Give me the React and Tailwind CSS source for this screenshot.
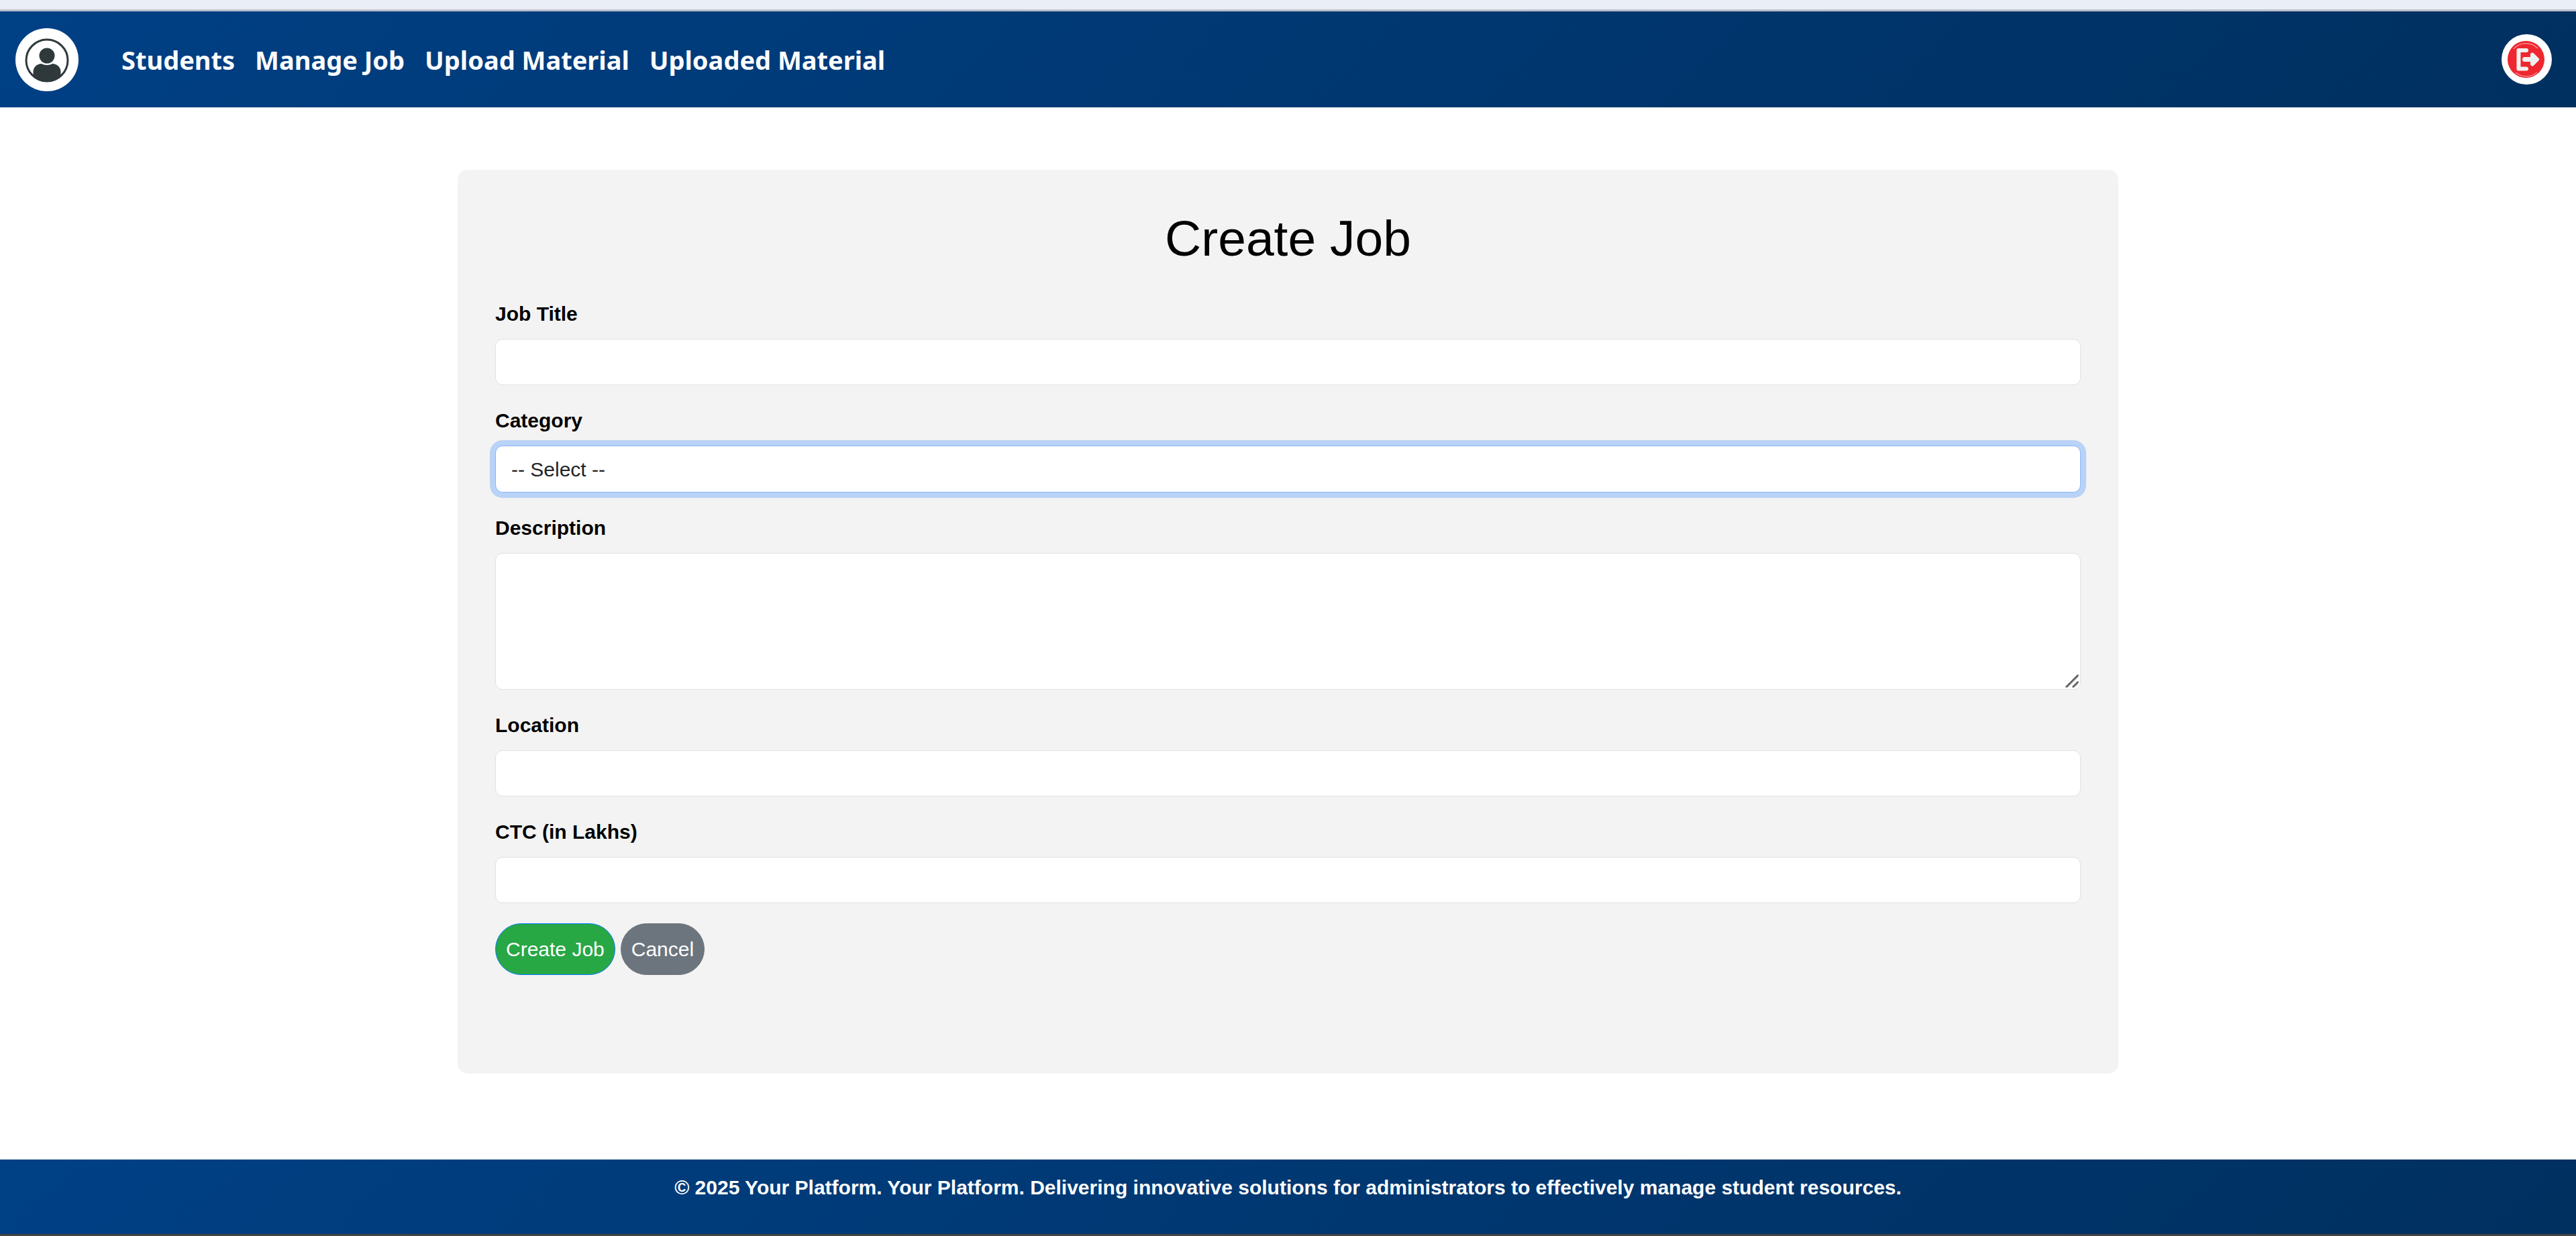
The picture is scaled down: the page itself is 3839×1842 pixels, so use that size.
function AvatarIcon() {
  return (
    <svg viewBox="0 0 94 94" className="size-full" aria-hidden="true">
      <clipPath id="avatar-clip">
        <circle cx="47" cy="47" r="32" />
      </clipPath>
      <circle cx="47" cy="47" r="47" fill="#fff" />
      <circle cx="47" cy="48" r="31" fill="none" stroke="#2f393c" strokeWidth="3" />
      <ellipse cx="47" cy="41" rx="11.5" ry="11.5" fill="#2f393c" />
      <path
        d="M26.500 73V65C26.500 58 32 53 39 53C43 55.500 51 55.500 55 53C62 53 67.500 58 67.500 65V73L60 77L47 80.500L34 77Z"
        fill="#2f393c"
        clipPath="url(#avatar-clip)"
      />
    </svg>
  );
}

function LogoutIcon() {
  return (
    <svg viewBox="0 0 75 75" className="size-full" aria-hidden="true">
      <circle cx="37.500" cy="37.500" r="37.500" fill="#fff" />
      <circle cx="36.500" cy="37.500" r="27.500" fill="#ef2730" />
      <path d="M18 22A25 25 0 0 1 54 21M21 57A25 25 0 0 0 53 57" fill="none" stroke="#f98b90" strokeWidth="1.500" />
      <path d="M37 24H25.500V51.500H37" fill="none" stroke="#f0f0f0" strokeWidth="6" strokeLinecap="round" strokeLinejoin="round" />
      <path d="M34.500 37.500H50" stroke="#f0f0f0" strokeWidth="7" strokeLinecap="round" />
      <path d="M46 30.500L53 37.500L46 44.500Z" fill="#f0f0f0" stroke="#f0f0f0" strokeWidth="6" strokeLinejoin="round" />
    </svg>
  );
}

const links = ["Students", "Manage Job", "Upload Material", "Uploaded Material"];

const fieldClass =
  "block w-full rounded-[11px] border border-[#dee2e6] bg-white px-[23px] text-[30px] text-[#212529] outline-none";

function Field({ id, label, children }) {
  return (
    <div className="mb-[30px]">
      <label htmlFor={id} className="mb-[15px] block w-fit text-[30px] leading-[45px] font-bold">
        {label}
      </label>
      {children}
    </div>
  );
}

export default function App() {
  return (
    <div className="flex min-h-screen flex-col bg-white font-['Liberation_Sans',Arial,sans-serif] text-black">
      <div className="h-[17px] border-b-[3px] border-[#bbbfca] bg-[#eaeef7]" />
      <header className="flex h-[143px] items-center justify-between bg-linear-135 from-[#004085] to-[#003060] pr-9 pl-[23px]">
        <div className="flex items-center gap-16">
          <a href="#profile" aria-label="Profile" className="block size-[94px]">
            <AvatarIcon />
          </a>
          <nav className="flex gap-[30px] font-['Noto_Sans',sans-serif] text-[38px] leading-[56px] font-bold text-white">
            {links.map((link) => (
              <a key={link} href="#nav">
                {link}
              </a>
            ))}
          </nav>
        </div>
        <button type="button" aria-label="Log out" className="size-[75px]">
          <LogoutIcon />
        </button>
      </header>

      <main className="flex-1 pt-[93px]">
        <form className="mx-auto w-full max-w-[2475px] rounded-[15px] bg-[#f3f3f3] px-14 pt-[57px] pb-[147px]">
          <h1 className="mb-[45px] text-center text-[75px] leading-[90px]">Create Job</h1>
          <Field id="title" label="Job Title">
            <input id="title" type="text" className={`${fieldClass} h-[69px]`} />
          </Field>
          <Field id="category" label="Category">
            <select
              id="category"
              className="block h-[70px] w-full appearance-none rounded-[11px] border border-[#86b7fe] bg-white px-[23px] text-[30px] text-[#212529] ring-8 ring-[#b9d2f7] outline-none"
            >
              <option>-- Select --</option>
            </select>
          </Field>
          <Field id="description" label="Description">
            <div className="relative">
              <textarea id="description" className={`${fieldClass} h-[204px] resize-none`} />
              <svg viewBox="0 0 20 20" className="absolute right-[3px] bottom-[3px] size-5" aria-hidden="true">
                <path d="M3 19L19 3M13 19L19 13" stroke="#c4c4c4" strokeWidth="2" />
                <path d="M1.500 18.500L18.500 1.500M11.500 18.500L18.500 11.500" stroke="#626263" strokeWidth="2.500" strokeLinecap="round" />
              </svg>
            </div>
          </Field>
          <Field id="location" label="Location">
            <input id="location" type="text" className={`${fieldClass} h-[69px]`} />
          </Field>
          <Field id="ctc" label="CTC (in Lakhs)">
            <input id="ctc" type="text" className={`${fieldClass} h-[69px]`} />
          </Field>
          <div className="flex gap-2 text-[30px] leading-[45px] text-white">
            <button type="submit" className="rounded-full border border-[#007bff] bg-[#28a745] px-[15px] py-[15px]">
              Create Job
            </button>
            <button type="button" className="rounded-full border border-[#6c757d] bg-[#6c757d] px-[15px] py-[15px]">
              Cancel
            </button>
          </div>
        </form>
      </main>

      <footer className="h-[114px] border-b-[3px] border-[#444444] bg-linear-135 from-[#004085] to-[#003060] pt-[19px] text-center text-[30px] leading-[45px] font-bold text-white">
        <p>
          © 2025 Your Platform. Your Platform. Delivering innovative solutions for administrators to effectively manage
          student resources.
        </p>
      </footer>
    </div>
  );
}
